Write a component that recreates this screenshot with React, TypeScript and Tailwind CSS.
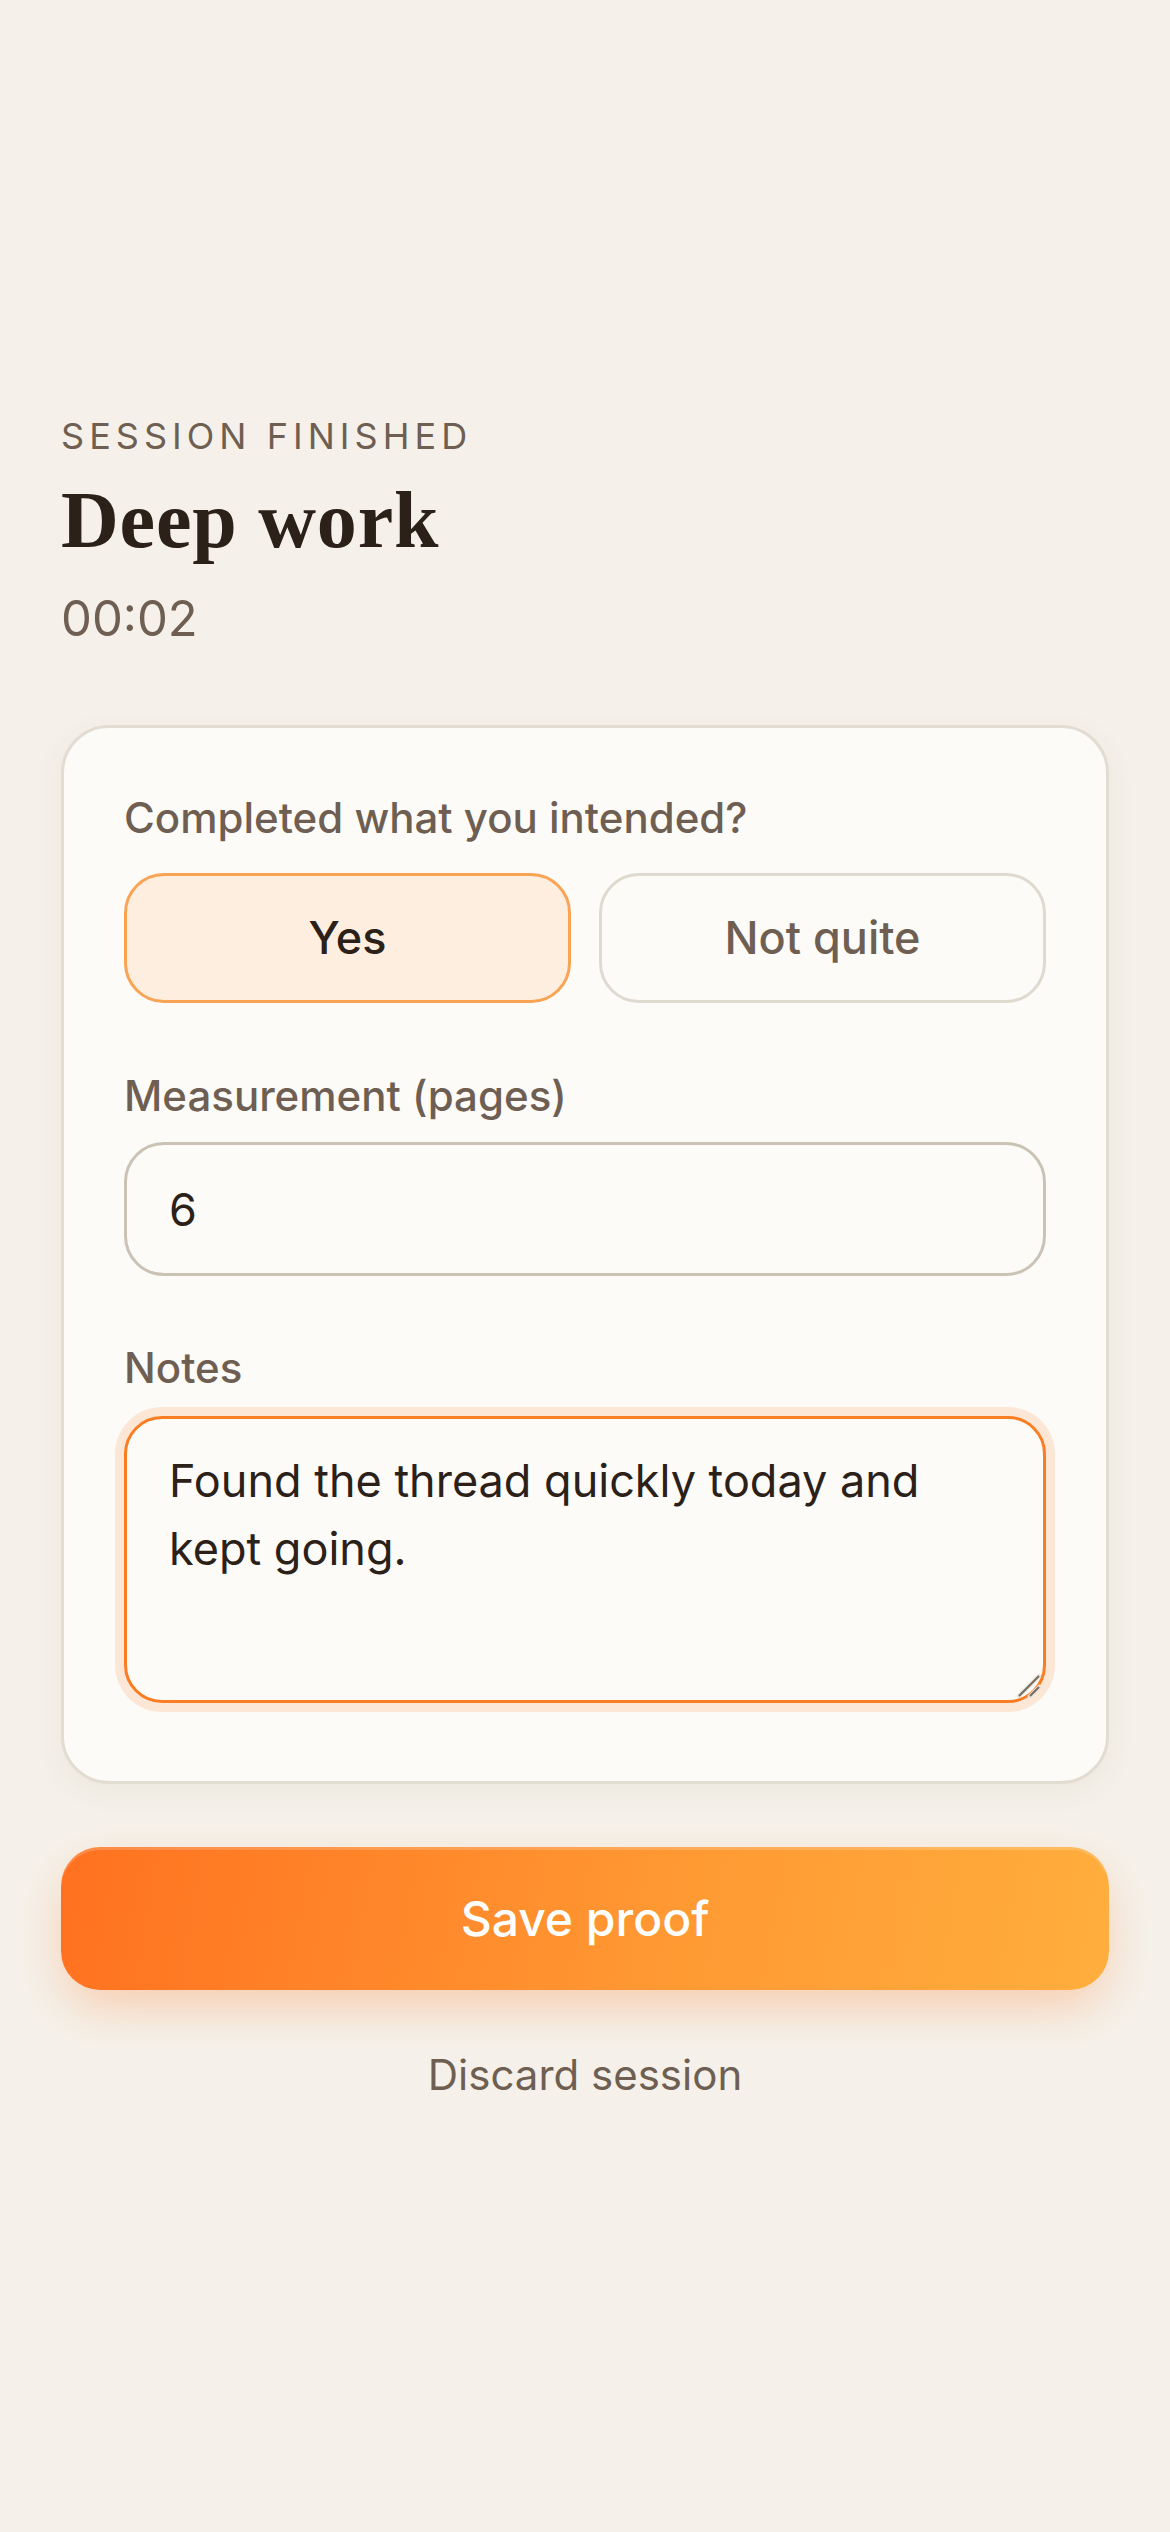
import React, { useState } from 'react';

const App: React.FC = () => {
  const [completed, setCompleted] = useState<'yes' | 'no'>('yes');
  const [pages, setPages] = useState('6');
  const [notes, setNotes] = useState('Found the thread quickly today and kept going.');

  return (
    <div className="min-h-screen bg-[#f5f1ea] px-[61px] pt-[412px] pb-[200px] font-['Inter',sans-serif]">
      <p className="text-[36px] leading-[48px] uppercase tracking-[0.14em] text-[#6e5f52]">Session finished</p>
      <h1 className="mt-[13px] font-['Liberation_Serif',serif] text-[80px] font-bold leading-[94px] tracking-[0.01em] text-[#2b2119]">Deep work</h1>
      <p className="mt-[16px] text-[49px] leading-[72px] text-[#6e5f52]">00:02</p>

      <div className="mt-[70px] rounded-[48px] border-[3px] border-[#e3dcd2] bg-[#fcfbf8] px-[60px] pt-[60px] pb-[78px] shadow-[0_8px_30px_rgba(90,70,40,0.06)]">
        <label className="block text-[42px] font-medium leading-[60px] text-[#6e5f52]">Completed what you intended?</label>
        <div className="mt-[25px] grid grid-cols-2 gap-[28px]">
          <button
            onClick={() => setCompleted('yes')}
            className={`h-[130px] rounded-[40px] border-[3px] text-[45px] font-medium ${completed === 'yes' ? 'border-[#f9a455] bg-[#fdeee0] text-[#2b2119]' : 'border-[#e0d9cf] bg-[#fcfbf8] text-[#6e5f52]'}`}
          >
            Yes
          </button>
          <button
            onClick={() => setCompleted('no')}
            className={`h-[130px] rounded-[40px] border-[3px] text-[45px] font-medium ${completed === 'no' ? 'border-[#f9a455] bg-[#fdeee0] text-[#2b2119]' : 'border-[#e0d9cf] bg-[#fcfbf8] text-[#6e5f52]'}`}
          >
            Not quite
          </button>
        </div>

        <label className="mt-[63px] block text-[42px] font-medium leading-[60px] text-[#6e5f52]">Measurement (pages)</label>
        <input
          type="text"
          value={pages}
          onChange={(e) => setPages(e.target.value)}
          className="mt-[16px] block h-[134px] w-full rounded-[40px] border-[3px] border-[#cbc2b6] bg-[#fcfbf8] px-[42px] text-[45px] text-[#2b2119] outline-none"
        />

        <label className="mt-[62px] block text-[42px] font-medium leading-[60px] text-[#6e5f52]">Notes</label>
        <div className="relative mt-[18px]">
          <textarea
            value={notes}
            onChange={(e) => setNotes(e.target.value)}
            className="block h-[287px] w-full resize-none rounded-[38px] border-[3px] border-[#f97d22] bg-[#fcfbf8] px-[42px] pt-[28px] text-[45px] leading-[67.5px] text-[#2b2119] outline-none shadow-[0_0_0_9px_#fce7d6]"
          />
          {/* resize grip */}
          <svg className="pointer-events-none absolute right-[5px] bottom-[5px] h-[24px] w-[24px]" viewBox="0 0 24 24">
            <path d="M22 2 L2 22" stroke="#e8e2da" strokeWidth="4" strokeLinecap="square" />
            <path d="M22 2 L2 22" stroke="#736a61" strokeWidth="2" />
            <path d="M22 13 L13 22" stroke="#e8e2da" strokeWidth="4" strokeLinecap="square" />
            <path d="M22 13 L13 22" stroke="#736a61" strokeWidth="2" />
          </svg>
        </div>
      </div>

      <button className="mt-[63px] h-[143px] w-full rounded-[39px] bg-[linear-gradient(100deg,#ff7120,#ff9a33_60%,#ffae3d)] text-[48px] font-medium text-white shadow-[inset_0_3px_0_rgba(255,255,255,0.18),0_20px_50px_-6px_rgba(255,130,50,0.35)]">
        Save proof
      </button>
      <button className="mx-auto mt-[55px] block text-[42px] leading-[60px] text-[#6e5f52]">Discard session</button>
    </div>
  );
};

export default App;
